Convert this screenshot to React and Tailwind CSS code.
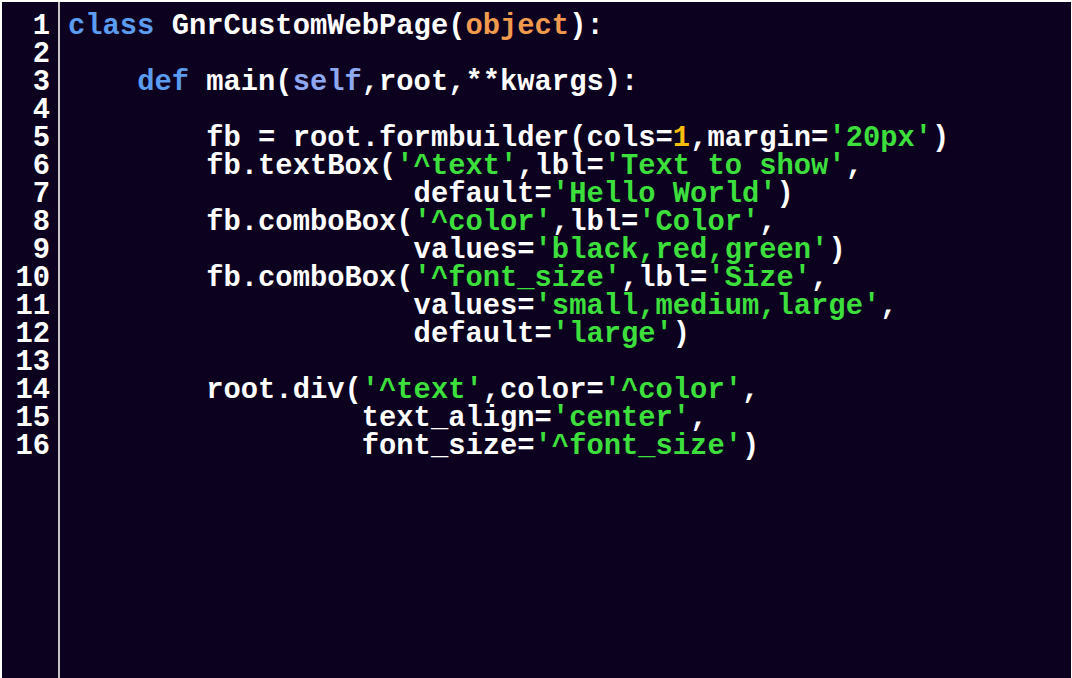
import React from 'react';

const W = 'text-white';
const KW = 'text-[#5b9cf0]';
const SELF = 'text-[#8fa8f2]';
const OBJ = 'text-[#f29a4e]';
const NUM = 'text-[#f7bd0a]';
const STR = 'text-[#3ddf3d]';

// each line is a list of [text, colorClass]
const lines = [
  [['class', KW], [' GnrCustomWebPage(', W], ['object', OBJ], ['):', W]],
  [],
  [['    ', W], ['def', KW], [' main(', W], ['self', SELF], [',root,**kwargs):', W]],
  [],
  [['        fb = root.formbuilder(cols=', W], ['1', NUM], [',margin=', W], ["'20px'", STR], [')', W]],
  [['        fb.textBox(', W], ["'^text'", STR], [',lbl=', W], ["'Text to show'", STR], [',', W]],
  [['                    default=', W], ["'Hello World'", STR], [')', W]],
  [['        fb.comboBox(', W], ["'^color'", STR], [',lbl=', W], ["'Color'", STR], [',', W]],
  [['                    values=', W], ["'black,red,green'", STR], [')', W]],
  [['        fb.comboBox(', W], ["'^font_size'", STR], [',lbl=', W], ["'Size'", STR], [',', W]],
  [['                    values=', W], ["'small,medium,large'", STR], [',', W]],
  [['                    default=', W], ["'large'", STR], [')', W]],
  [],
  [['        root.div(', W], ["'^text'", STR], [',color=', W], ["'^color'", STR], [',', W]],
  [['                 text_align=', W], ["'center'", STR], [',', W]],
  [['                 font_size=', W], ["'^font_size'", STR], [')', W]],
];

export default function App() {
  return (
    <div
      className="flex h-screen w-full overflow-hidden bg-[#0c0220] border-t-2 border-l-2 border-r border-white font-bold text-[28.8px] leading-[28px]"
      style={{ fontFamily: '"Liberation Mono", "Courier New", monospace' }}
    >
      {/* Gutter */}
      <div className="w-[58px] shrink-0 border-r-2 border-[#c4c4c4] pt-[11px] pr-[8px] text-right text-white">
        {lines.map((_, i) => (
          <div key={i} className="h-[28px]">{i + 1}</div>
        ))}
      </div>

      {/* Code */}
      <div className="flex-1 pt-[11px] pl-[8px] whitespace-pre">
        {lines.map((segs, i) => (
          <div key={i} className="h-[28px]">
            {segs.map(([t, c], j) => (
              <span key={j} className={c}>{t}</span>
            ))}
          </div>
        ))}
      </div>
    </div>
  );
}
